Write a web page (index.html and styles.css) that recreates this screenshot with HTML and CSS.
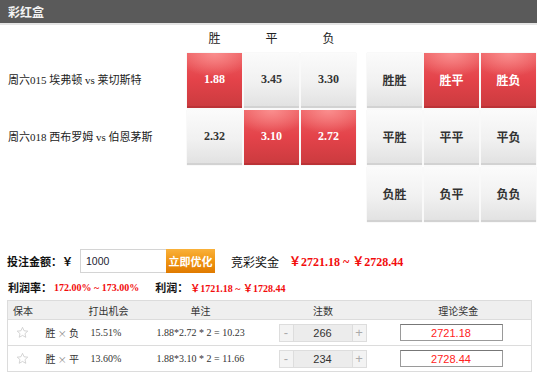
FILE: index.html
```html
<!DOCTYPE html>
<html lang="zh-CN">
<head>
    <meta charset="UTF-8">
    <meta name="viewport" content="width=device-width, initial-scale=1.0">
    <title>彩红盒</title>
    <link rel="stylesheet" href="styles.css">
</head>
<body>
<div class="title-bar">彩红盒</div>

<div class="board">
    <div class="matches">
        <div class="match">周六015 埃弗顿 vs 莱切斯特</div>
        <div class="match">周六018 西布罗姆 vs 伯恩茅斯</div>
    </div>
    <div class="odds">
        <div class="odds-head">
            <span>胜</span><span>平</span><span>负</span>
        </div>
        <div class="grid">
            <div class="cell on">1.88</div>
            <div class="cell">3.45</div>
            <div class="cell">3.30</div>
            <div class="cell">2.32</div>
            <div class="cell on">3.10</div>
            <div class="cell on">2.72</div>
        </div>
    </div>
    <div class="combos">
        <div class="grid">
            <div class="cell txt">胜胜</div>
            <div class="cell txt on">胜平</div>
            <div class="cell txt on">胜负</div>
            <div class="cell txt">平胜</div>
            <div class="cell txt">平平</div>
            <div class="cell txt">平负</div>
            <div class="cell txt">负胜</div>
            <div class="cell txt">负平</div>
            <div class="cell txt">负负</div>
        </div>
    </div>
</div>

<div class="bet-row">
    <span class="label">投注金额：￥</span>
    <input type="text" class="amount" value="1000">
    <button type="button" class="optimize">立即优化</button>
    <span class="prize-label">竞彩奖金</span>
    <span class="red big">￥2721.18 ~ ￥2728.44</span>
</div>

<div class="profit-row">
    <span class="label">利润率：</span>
    <span class="red">172.00% ~ 173.00%</span>
    <span class="label gap">利润：</span>
    <span class="red">￥1721.18 ~ ￥1728.44</span>
</div>

<table class="plans">
    <colgroup>
        <col style="width:33px"><col style="width:45px"><col style="width:65px">
        <col style="width:110px"><col style="width:125px"><col style="width:146px">
    </colgroup>
    <tr class="head">
        <th colspan="2" class="h-keep">保本</th>
        <th class="h-chance">打出机会</th>
        <th class="h-single">单注</th>
        <th class="h-center">注数</th>
        <th class="h-center">理论奖金</th>
    </tr>
    <tr>
        <td class="star-cell">
            <svg width="13" height="13" viewBox="0 0 24 24"><path d="M12 2.5l2.9 6.3 6.8.7-5.1 4.6 1.5 6.8L12 17.4l-6.1 3.5 1.5-6.8-5.1-4.6 6.8-.7z" fill="none" stroke="#c8c8c8" stroke-width="1.4" stroke-linejoin="round"/></svg>
        </td>
        <td class="pick">胜 <em>×</em> 负</td>
        <td class="num">15.51%</td>
        <td class="num single">1.88*2.72 * 2 = 10.23</td>
        <td>
            <div class="stepper"><span class="btn">-</span><span class="val">266</span><span class="btn">+</span></div>
        </td>
        <td><input type="text" class="payout" value="2721.18"></td>
    </tr>
    <tr>
        <td class="star-cell">
            <svg width="13" height="13" viewBox="0 0 24 24"><path d="M12 2.5l2.9 6.3 6.8.7-5.1 4.6 1.5 6.8L12 17.4l-6.1 3.5 1.5-6.8-5.1-4.6 6.8-.7z" fill="none" stroke="#c8c8c8" stroke-width="1.4" stroke-linejoin="round"/></svg>
        </td>
        <td class="pick">胜 <em>×</em> 平</td>
        <td class="num">13.60%</td>
        <td class="num single">1.88*3.10 * 2 = 11.66</td>
        <td>
            <div class="stepper"><span class="btn">-</span><span class="val">234</span><span class="btn">+</span></div>
        </td>
        <td><input type="text" class="payout" value="2728.44"></td>
    </tr>
</table>
</body>
</html>
```

FILE: styles.css
```css
body {
    margin: 0;
    padding: 0;
    background-color: #fff;
    color: #222;
    font-family: "Liberation Serif", "Noto Sans CJK SC", serif;
    font-size: 12px;
}
.title-bar {
    height: 23px;
    line-height: 23px;
    padding-left: 8px;
    background-color: #5a5a5a;
    border-bottom: 2px solid #e4e4e4;
    color: #f4f4f4;
    font-family: "Noto Sans CJK SC", sans-serif;
    font-weight: bold;
    font-size: 12px;
}
.board {
    display: flex;
    margin-top: 3px;
}
.matches {
    width: 179px;
    padding-left: 8px;
    padding-top: 25px;
}
.match {
    height: 55px;
    line-height: 55px;
    margin-bottom: 2px;
    font-size: 11px;
}
.odds-head {
    display: grid;
    grid-template-columns: repeat(3, 55px);
    column-gap: 2px;
    height: 25px;
    line-height: 20px;
    text-align: center;
    font-family: "Noto Sans CJK SC", sans-serif;
    font-size: 12px;
}
.grid {
    display: grid;
    grid-template-columns: repeat(3, 55px);
    grid-auto-rows: 55px;
    gap: 2px;
}
.combos {
    margin-left: 11px;
    padding-top: 25px;
}
.cell {
    display: flex;
    align-items: center;
    justify-content: center;
    box-sizing: border-box;
    background: linear-gradient(#fbfbfb, #f1f1f1 55%, #e2e2e2);
    border-bottom: 2px solid #d2d2d2;
    box-shadow: 0 0 1px rgba(0, 0, 0, 0.15);
    color: #333;
    font-weight: bold;
    font-size: 12px;
}
.cell.txt {
    font-family: "Noto Sans CJK SC", sans-serif;
    font-size: 12px;
}
.cell.on {
    background: radial-gradient(ellipse 70% 45% at 50% 0%, #fa8e8e, rgba(250, 142, 142, 0) 100%),
                linear-gradient(#ec5c5f, #e4434a 50%, #cc3b3f);
    border-bottom: 2px solid #bb3236;
    color: #fff;
}
.bet-row {
    display: flex;
    align-items: center;
    margin-top: 27px;
    padding-left: 7px;
    height: 24px;
}
.label {
    font-family: "Noto Sans CJK SC", sans-serif;
    font-weight: bold;
    font-size: 11px;
    color: #111;
}
.amount {
    box-sizing: border-box;
    width: 86px;
    height: 24px;
    margin-left: 7px;
    padding: 0 5px;
    border: 1px solid #d4d4d4;
    border-right: none;
    font-family: "Liberation Sans", sans-serif;
    font-size: 10.5px;
    color: #223;
    outline: none;
}
.optimize {
    width: 49px;
    height: 24px;
    border: none;
    padding: 0;
    background: linear-gradient(#f9b13a, #f09512 50%, #e07a00);
    color: #fff;
    font-family: "Noto Sans CJK SC", sans-serif;
    font-weight: bold;
    font-size: 11px;
}
.prize-label {
    margin-left: 16px;
    font-family: "Noto Sans CJK SC", sans-serif;
    font-size: 12px;
    color: #111;
}
.red {
    color: #f20c0c;
    font-weight: bold;
    font-size: 10px;
}
.red.big {
    margin-left: 10px;
    font-size: 12px;
}
.profit-row {
    display: flex;
    align-items: center;
    margin-top: 5px;
    padding-left: 8px;
    height: 18px;
}
.profit-row .red {
    margin-left: 2px;
}
.profit-row .gap {
    margin-left: 16px;
}
.plans {
    margin: 4px 0 0 7px;
    width: 524px;
    border-collapse: collapse;
    border: 1px solid #dcdcdc;
    table-layout: fixed;
    font-size: 10px;
}
.plans th {
    height: 18px;
    background-color: #efefef;
    font-family: "Noto Sans CJK SC", sans-serif;
    font-weight: normal;
    font-size: 10px;
    color: #333;
    text-align: left;
    padding: 0;
}
.plans .h-keep { padding-left: 5px; }
.plans .h-chance { padding-left: 3px; }
.plans .h-single { padding-left: 40px; }
.plans .h-center { text-align: center; }
.plans td {
    height: 25px;
    padding: 0;
    border-top: 1px solid #dcdcdc;
    color: #333;
}
.star-cell {
    padding-left: 8px !important;
}
.star-cell svg {
    display: block;
}
.pick {
    padding-left: 5px !important;
    font-family: "Noto Sans CJK SC", sans-serif;
    font-size: 10px;
}
.pick em {
    font-style: normal;
    color: #888;
    font-size: 9px;
}
.num {
    padding-left: 5px !important;
    font-size: 10px;
}
.single {
    padding-left: 6px !important;
}
.stepper {
    display: flex;
    width: 86px;
    height: 16px;
    margin-left: 18px;
    border: 1px solid #ddd;
    font-family: "Liberation Sans", sans-serif;
}
.stepper .btn {
    width: 13px;
    line-height: 15px;
    text-align: center;
    background-color: #f3f3f3;
    color: #aaa;
    font-size: 13px;
}
.stepper .val {
    flex: 1;
    line-height: 16px;
    text-align: center;
    background-color: #ececec;
    border-left: 1px solid #ddd;
    border-right: 1px solid #ddd;
    color: #333;
    font-size: 11px;
}
.payout {
    box-sizing: border-box;
    width: 103px;
    height: 17px;
    margin-left: 14px;
    border: 1px solid #9a9a9a;
    border-top-color: #777;
    text-align: center;
    color: #f22;
    font-family: "Liberation Sans", sans-serif;
    font-size: 11px;
    padding: 0;
    display: block;
}
```
